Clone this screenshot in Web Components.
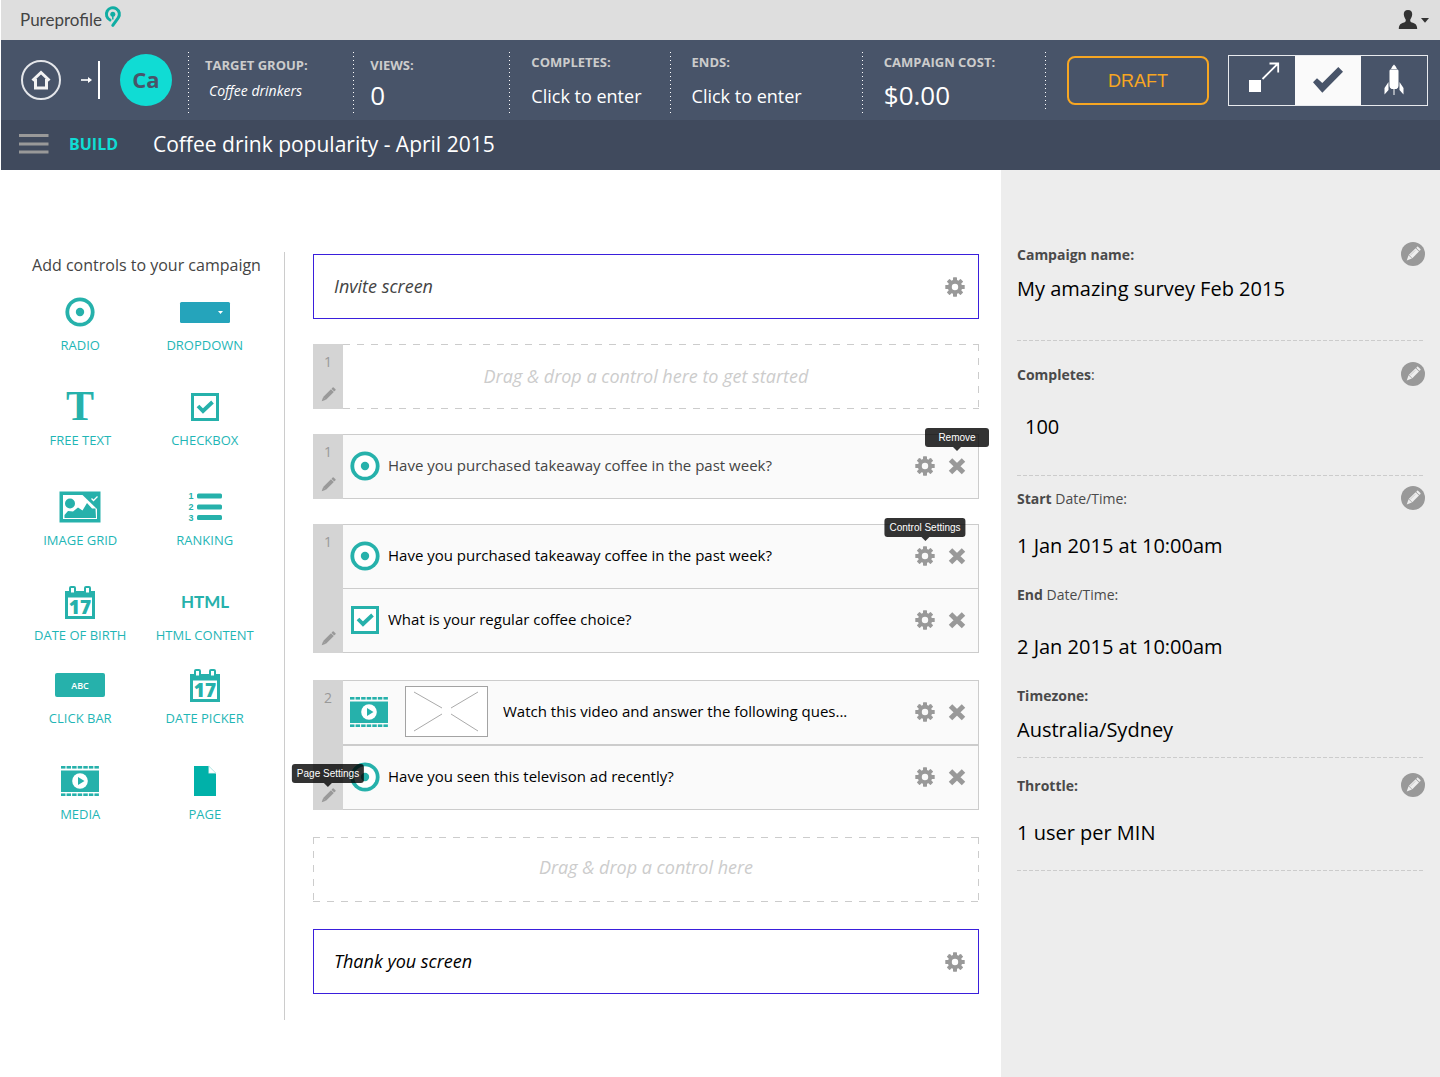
<!DOCTYPE html>
<html lang="en">
<head>
<meta charset="utf-8">
<title>Pureprofile – Build campaign</title>
<style>
  html { height: 100%; }
  body {
    margin: 0; padding-left: 1px; box-sizing: border-box; min-height: 100%;
    display: flex; flex-direction: column; background: #fff; color: #000;
    font-family: "Open Sans", "Noto Sans", sans-serif; font-size: 15px;
    --teal: #26b1ab; --label: #1fb6b6; --bright: #10dcd4; --line: #ccc; --grey: #999; --navy: #485469;
  }
  .workspace { flex: 1; display: flex; }
  main { flex: 1; min-width: 0; padding: 84px 22px 40px 28px; }
</style>
</head>
<body>
<pp-top-bar></pp-top-bar>

<pp-campaign-bar initials="Ca">
  <pp-stat label="Target group:" kind="note">Coffee drinkers</pp-stat>
  <pp-stat label="Views:" kind="number">0</pp-stat>
  <pp-stat label="Completes:" kind="action" wide>Click to enter</pp-stat>
  <pp-stat label="Ends:" kind="action" wide>Click to enter</pp-stat>
  <pp-stat label="Campaign cost:" kind="number" wide>$0.00</pp-stat>
</pp-campaign-bar>

<pp-title-bar mode="BUILD">Coffee drink popularity - April 2015</pp-title-bar>

<div class="workspace">
  <pp-palette heading="Add controls to your campaign">
    <pp-tool icon="radio">RADIO</pp-tool>
    <pp-tool icon="dropdown">DROPDOWN</pp-tool>
    <pp-tool icon="text">FREE TEXT</pp-tool>
    <pp-tool icon="checkbox">CHECKBOX</pp-tool>
    <pp-tool icon="image">IMAGE GRID</pp-tool>
    <pp-tool icon="ranking">RANKING</pp-tool>
    <pp-tool icon="calendar">DATE OF BIRTH</pp-tool>
    <pp-tool icon="html">HTML CONTENT</pp-tool>
    <pp-tool icon="clickbar">CLICK BAR</pp-tool>
    <pp-tool icon="calendar">DATE PICKER</pp-tool>
    <pp-tool icon="media">MEDIA</pp-tool>
    <pp-tool icon="page">PAGE</pp-tool>
  </pp-palette>

  <main>
    <pp-screen muted>Invite screen</pp-screen>
    <pp-page number="1"><pp-drop-zone>Drag &amp; drop a control here to get started</pp-drop-zone></pp-page>
    <pp-page number="1">
      <pp-question icon="radio" muted remove-tip="Remove">Have you purchased takeaway coffee in the past week?</pp-question>
    </pp-page>
    <pp-page number="1">
      <pp-question icon="radio" settings-tip="Control Settings">Have you purchased takeaway coffee in the past week?</pp-question>
      <pp-question icon="checkbox" joined>What is your regular coffee choice?</pp-question>
    </pp-page>
    <pp-page number="2" tip="Page Settings" loose>
      <pp-question icon="media" thumb>Watch this video and answer the following ques...</pp-question>
      <pp-question icon="radio">Have you seen this televison ad recently?</pp-question>
    </pp-page>
    <pp-drop-zone framed>Drag &amp; drop a control here</pp-drop-zone>
    <pp-screen loose>Thank you screen</pp-screen>
  </main>

  <pp-details>
    <pp-section>
      <pp-field editable><b slot="label">Campaign name:</b>My amazing survey Feb 2015</pp-field>
    </pp-section>
    <pp-section class="roomy">
      <pp-field editable space="far" indent><span slot="label"><b>Completes</b>:</span>100</pp-field>
    </pp-section>
    <pp-section class="dates">
      <pp-field editable space="mid"><span slot="label"><b>Start</b> Date/Time:</span>1 Jan 2015 at 10:00am</pp-field>
      <pp-field space="far"><span slot="label"><b>End</b> Date/Time:</span>2 Jan 2015 at 10:00am</pp-field>
      <pp-field><b slot="label">Timezone:</b>Australia/Sydney</pp-field>
    </pp-section>
    <pp-section class="last">
      <pp-field editable space="mid"><b slot="label">Throttle:</b>1 user per MIN</pp-field>
    </pp-section>
  </pp-details>
</div>

<script>
const RESET = `
  *, *::before, *::after { box-sizing: border-box; }
  button { font: inherit; color: inherit; background: none; border: 0; padding: 0; margin: 0; cursor: pointer; }
  a { color: inherit; text-decoration: none; }
  pp-icon { flex: none; }
`;

function define(name, build) {
  customElements.define(name, class extends HTMLElement {
    connectedCallback() {
      if (this.shadowRoot) return;
      const template = document.createElement('template');
      template.innerHTML = build(this);
      this.attachShadow({ mode: 'open' }).append(template.content.cloneNode(true));
    }
  });
}

/* ---------- icons: [width, height, markup] ---------- */
const teeth = [0, 45, 90, 135, 180, 225, 270, 315]
  .map(a => `<rect x="8" y="0.3" width="4" height="5" rx="0.6" transform="rotate(${a} 10 10)"/>`).join('');
const perforations = (y, w) => Array.from({ length: 7 }, (_, i) =>
  `<rect x="${(i * (w + 1) / 7).toFixed(2)}" y="${y}" width="${((w + 1) / 7 - 1.1).toFixed(2)}" height="2.6"/>`).join('');
const ICONS = {
  radio: [30, 30, `<circle cx="15" cy="15" r="14.6" fill="#26b1ab"/><circle cx="15" cy="15" r="10.8" fill="#fff"/><circle cx="15" cy="15" r="4.2" fill="#26b1ab"/>`],
  dropdown: [50, 21, `<rect width="50" height="21" rx="1.5" fill="#25a4bb"/><path d="M38 9h5l-2.5 3z" fill="#fff"/>`],
  text: [30, 32, `<text x="15" y="29" text-anchor="middle" font-family="Liberation Serif, serif" font-weight="700" font-size="42" fill="#26b1ab">T</text>`],
  checkbox: [30, 30, `<rect x="2.5" y="2.5" width="25" height="25" fill="#fff" stroke="#26b1ab" stroke-width="3"/><path d="M8 14l5 5 9.500-9" fill="none" stroke="#26b1ab" stroke-width="3.800"/>`],
  image: [42, 32, `<path d="M0.5 0.5h41v31h-41z" fill="#26b1ab"/><path d="M4 4h19.5L38 18v10H4z" fill="#fff"/><circle cx="11" cy="12.5" r="5" fill="#26b1ab"/><path d="M5.500 27v-3l3.500-4 5 .5 5-4 4.500 3 4.500-7.500 5 5.500h3.500l.5 9.500z" fill="#26b1ab"/><path d="M32.500 7.500l2 2 4-4" fill="none" stroke="#fff" stroke-width="1.3"/>`],
  ranking: [34, 30, `<g fill="#26b1ab"><rect x="9" y="1.500" width="25" height="5" rx="1.500"/><rect x="9" y="12.500" width="25" height="5" rx="1.500"/><rect x="9" y="23" width="25" height="5" rx="1.500"/><g font-family="Liberation Sans, Arial, sans-serif" font-weight="700" font-size="9"><text x="0.500" y="7">1</text><text x="0.500" y="18">2</text><text x="0.500" y="29">3</text></g></g>`],
  calendar: [30, 33, `<path d="M0 5h30v28H0z" fill="#26b1ab"/><path d="M3 11.500h24v18.500H3z" fill="#fff"/><g fill="#fff" stroke="#26b1ab" stroke-width="2"><rect x="5" y="1" width="5" height="6.500" rx="1"/><rect x="20" y="1" width="5" height="6.500" rx="1"/></g><text x="15" y="27.500" text-anchor="middle" font-family="Open Sans, sans-serif" font-weight="800" font-size="19" fill="#26b1ab">17</text>`],
  html: [48, 22, `<text x="24" y="17" text-anchor="middle" font-family="Lato, sans-serif" font-weight="700" font-size="17" fill="#26b1ab">HTML</text>`],
  clickbar: [50, 24, `<rect width="50" height="24" rx="2" fill="#26b1ab"/><text x="25" y="15.500" text-anchor="middle" font-family="Open Sans, sans-serif" font-weight="600" font-size="9" fill="#fff">ABC</text>`],
  media: [38, 30, `<g fill="#26b1ab">${perforations(0, 38)}${perforations(27.4, 38)}<rect y="4.500" width="38" height="21.500"/></g><circle cx="19" cy="15" r="7.800" fill="#fff"/><path d="M17 11v8l6.500-4z" fill="#26b1ab"/>`],
  page: [22, 30, `<path d="M0 0h14.500L22 7.500V30H0z" fill="#00b1a9"/><path d="M14.700 0v7.300H22z" fill="#fff" stroke="#8fd9d5" stroke-width=".5"/>`],
  gear: [20, 20, `<g fill="#999">${teeth}</g><circle cx="10" cy="10" r="5.200" fill="none" stroke="#999" stroke-width="4"/>`],
  close: [20, 20, `<path d="M3.500 4l13 12.500M16.500 4l-13 12.500" stroke="#999" stroke-width="5" fill="none"/>`],
  pencil: [16, 16, `<g fill="#999" transform="rotate(45 8 8)"><rect x="6" y="-1.300" width="4" height="2.500" rx=".7"/><rect x="6" y="1.800" width="4" height="11"/><path d="M6 12.800h4l-2 4.200z"/></g>`],
  edit: [24, 24, `<circle cx="12" cy="12" r="12" fill="#999"/><g fill="#eee" transform="rotate(45 12 12)"><rect x="9.700" y="3.300" width="4.800" height="2" rx=".7"/><rect x="9.700" y="6" width="4.800" height="9.500"/><path d="M9.700 16h4.800L12.100 21z"/></g><path d="M14.300 8.300l-5 5" stroke="#bbb" stroke-width=".7"/>`],
  thumb: [83, 51, `<rect x=".5" y=".5" width="82" height="50" fill="#fff" stroke="#a3a3a3"/><path d="M9 6l28 16M73 6L46 22M9 45l28-17M73 45L46 28" stroke="#aaa" fill="none"/>`],
  home: [40, 40, `<circle cx="20" cy="20" r="19" fill="none" stroke="#e4e6ea" stroke-width="2"/><path d="M11.500 20.500L20 12.500l8.500 8M14.500 19v9h11v-9" fill="none" stroke="#f3f3f3" stroke-width="3"/>`],
  next: [12, 10, `<path d="M0 5h8" stroke="#fff" stroke-width="1.600"/><path d="M7 2l4 3-4 3z" fill="#fff"/>`],
  menu: [30, 20, `<g fill="#999"><rect y="0" width="29.500" height="3"/><rect y="8.500" width="29.500" height="3"/><rect y="16.500" width="29.500" height="3"/></g>`],
  expand: [32, 32, `<path d="M3 16h12v12H3z" fill="#fff"/><path d="M16.500 15L32 -.5M23.500 -.5h8.700v9" fill="none" stroke="#fff" stroke-width="1.800"/>`],
  tick: [30, 26, `<path d="M0 15.300l4-4 5.300 4.700L25.300 0 30 4.700 9.300 25.700z" fill="#485469"/>`],
  rocket: [20, 32, `<g fill="#fff"><path d="M7 5q1-3 3-4.500Q12 2 13 5z"/><path d="M5.500 7q0-1 1-1.400h7q1 .4 1 1.400v15q0 2-2 3h-5q-2-1-2-3z"/><path d="M4.500 18v8L.5 30.500V24zM15.500 18v8l4 4.500V24z"/><rect x="9.500" y="25" width="1" height="6"/></g>`],
  user: [20, 20, `<path d="M10 0c3 0 4.400 1.900 4.200 4.500-.2 2.500-1.400 4-1.900 5-.3 1.600.2 2.500 1.500 3 3.200 1 5.400 1.800 5.400 6.500H.8c0-4.700 2.200-5.500 5.400-6.500 1.300-.5 1.800-1.400 1.500-3-.5-1-1.700-2.500-1.900-5C5.600 1.900 7 0 10 0z" fill="#333"/>`],
  caret: [8, 5, `<path d="M0 0h8L4 4.800z" fill="#333"/>`],
  pin: [17, 22, `<path d="M5 14A6.500 6.500 0 1 1 13.200 11.900L7.800 19.300" fill="none" stroke="#10ada3" stroke-width="3" stroke-linecap="round"/><circle cx="7.800" cy="8.200" r="2.500" fill="#10ada3"/><path d="M7.800 9v4.500" stroke="#10ada3" stroke-width="1.500"/>`]
};

define('pp-icon', el => {
  const [w, h, body] = ICONS[el.getAttribute('name')];
  return `<style>:host { display: inline-flex; } svg { display: block; overflow: visible; }</style>
    <svg width="${w}" height="${h}" viewBox="0 0 ${w} ${h}" aria-hidden="true">${body}</svg>`;
});

define('pp-tooltip', () => `
  <style>
    :host { position: absolute; left: 50%; bottom: 100%; transform: translateX(-50%); z-index: 2; pointer-events: none;
      padding: 0 5px; height: 19px; min-width: 64px; text-align: center; white-space: nowrap; border-radius: 3px;
      background: rgba(0, 0, 0, .8); color: #fff; font: 10px/19px "Liberation Sans", Arial, sans-serif; }
    :host::after { content: ""; position: absolute; left: 50%; top: 100%; margin-left: -4px;
      border: 4px solid transparent; border-bottom: 0; border-top-color: rgba(0, 0, 0, .8); }
  </style><slot></slot>`);

/* ---------- header ---------- */
define('pp-top-bar', () => `
  <style>${RESET}
    :host { display: flex; align-items: center; justify-content: space-between; height: 40px; padding: 0 11px 0 19px; background: #dedede; }
    .brand { display: flex; align-items: flex-start; gap: 3px; color: #444; font: 17px/28px Lato, sans-serif; }
    .user { display: flex; align-items: center; gap: 3px; }
  </style>
  <a class="brand" href="#">Pureprofile<pp-icon name="pin"></pp-icon></a>
  <button class="user" aria-label="Account"><pp-icon name="user"></pp-icon><pp-icon name="caret"></pp-icon></button>`);

define('pp-campaign-bar', el => `
  <style>${RESET}
    :host { display: flex; align-items: center; height: 80px; padding: 0 12px 0 20px; background: var(--navy); color: #fff; }
    .home { display: flex; }
    .next { margin-left: 20px; padding-right: 5px; border-right: 2px solid #fff; height: 38px; display: flex; align-items: center; }
    .avatar { flex: none; width: 52px; height: 52px; margin: 0 16px 0 20px; border-radius: 50%; background: var(--bright); color: var(--navy);
      font-weight: 700; font-size: 22px; line-height: 50px; text-align: center; }
    .stats { flex: 1; display: grid; grid-template-columns: 165fr 156fr 160fr 192fr 184fr; height: 57px;
      background: repeating-linear-gradient(#fff 0 1px, transparent 1px 4px) right / 1px 100% no-repeat; }
    .status { width: 142px; height: 49px; margin: 0 19px 0 21px; padding: 3px 0 0; border: 2px solid #f7a622; border-radius: 8px; color: #f7a622;
      font: 18px "Liberation Sans", Arial, sans-serif; }
    .steps { display: flex; border: 1px solid #e8eaee; height: 51px; }
    .steps button { width: 66px; display: flex; align-items: center; justify-content: center; }
    .steps .on { background: #fafafa; }
  </style>
  <a class="home" href="#" aria-label="Home"><pp-icon name="home"></pp-icon></a>
  <span class="next"><pp-icon name="next"></pp-icon></span>
  <span class="avatar">${el.getAttribute('initials')}</span>
  <div class="stats"><slot></slot></div>
  <button class="status">DRAFT</button>
  <div class="steps">
    <button aria-label="Plan"><pp-icon name="expand"></pp-icon></button>
    <button class="on" aria-label="Check" aria-pressed="true"><pp-icon name="tick"></pp-icon></button>
    <button aria-label="Launch"><pp-icon name="rocket"></pp-icon></button>
  </div>`);

define('pp-stat', el => `
  <style>${RESET}
    :host { display: flex; flex-direction: column; padding: 4px 0 0 17px; white-space: nowrap;
      background: repeating-linear-gradient(#fff 0 1px, transparent 1px 4px) left / 1px 100% no-repeat; }
    :host([wide]) { padding: 1px 0 0 22px; }
    .label { font-weight: 700; font-size: 13px; line-height: 18px; color: #ccc; text-transform: uppercase; }
    .value { text-align: left; line-height: 36px; font-size: 18px; margin-top: 3px; }
    :host([wide]) .value { margin-top: 6px; }
    .note { font-style: italic; font-size: 14px; line-height: 28px; padding-left: 4px; }
    .number { font-size: 26px; }
    button.value { line-height: 38px; }
  </style>
  <span class="label">${el.getAttribute('label')}</span>
  ${el.getAttribute('kind') === 'action'
    ? '<button class="value"><slot></slot></button>'
    : `<span class="value ${el.getAttribute('kind')}"><slot></slot></span>`}`);

define('pp-title-bar', el => `
  <style>${RESET}
    :host { display: flex; align-items: center; height: 50px; box-sizing: border-box; padding: 0 18px 2px; background: #404a5d; color: #fff; }
    button { display: flex; }
    strong { margin-left: 20px; width: 84px; font-size: 16px; line-height: 24px; color: var(--bright); }
    h1 { margin: 0; font-weight: 400; font-size: 21px; line-height: 30px; }
  </style>
  <button aria-label="Menu"><pp-icon name="menu"></pp-icon></button>
  <strong>${el.getAttribute('mode')}</strong>
  <h1><slot></slot></h1>`);

/* ---------- palette ---------- */
define('pp-palette', el => `
  <style>${RESET}
    :host { display: block; width: 284px; padding: 82px 0 57px; }
    .inner { height: 100%; border-right: 1px solid var(--line); padding: 0 17px; }
    h2 { margin: 0; padding-left: 8px; font-weight: 400; font-size: 16px; line-height: 26px; color: #444; text-align: center; }
    .tools { display: grid; grid-template-columns: 1fr 1fr; grid-template-rows: 95px 100px 95px 83px 96px auto; margin-top: 17px; }
  </style>
  <div class="inner"><h2>${el.getAttribute('heading')}</h2><div class="tools"><slot></slot></div></div>`);

define('pp-tool', el => `
  <style>${RESET}
    :host { display: flex; justify-content: center; align-items: flex-start; }
    button { display: flex; flex-direction: column; align-items: center; gap: 7px; color: var(--label); font-size: 13px; line-height: 18px; white-space: nowrap; }
    .art { height: 34px; display: flex; align-items: center; }
  </style>
  <button><span class="art"><pp-icon name="${el.getAttribute('icon')}"></pp-icon></span><slot></slot></button>`);

/* ---------- canvas ---------- */
define('pp-screen', () => `
  <style>${RESET}
    :host { display: flex; align-items: center; justify-content: space-between; height: 65px; box-sizing: border-box;
      padding: 0 13px 0 20px; border: 1px solid #3a1fdc; font-style: italic; font-size: 18px; }
    :host([muted]) { color: #444; }
    :host([loose]) { margin-top: 27px; }
    .title { padding-bottom: 2px; }
    button { display: flex; }
  </style>
  <span class="title"><slot></slot></span><button aria-label="Screen settings"><pp-icon name="gear"></pp-icon></button>`);

define('pp-drop-zone', () => `
  <style>
    :host { --h: repeating-linear-gradient(90deg, #ccc 0 7px, transparent 7px 14px); --v: repeating-linear-gradient(#ccc 0 7px, transparent 7px 14px);
      display: flex; align-items: center; justify-content: center; height: 65px; box-sizing: border-box; color: #ccc; font-style: italic; font-size: 18px;
      padding: 0 30px 2px 0;
      background: var(--h) top / 100% 1px no-repeat, var(--h) bottom / 100% 1px no-repeat, var(--v) right / 1px 100% no-repeat; }
    :host([framed]) { margin-top: 27px; padding: 0 0 6px;
      background: var(--h) top / 100% 1px no-repeat, var(--h) bottom / 100% 1px no-repeat, var(--v) right / 1px 100% no-repeat, var(--v) left / 1px 100% no-repeat; }
  </style><slot></slot>`);

define('pp-page', el => `
  <style>${RESET}
    :host { display: flex; margin-top: 25px; }
    :host([loose]) { margin-top: 27px; }
    .side { width: 30px; flex: none; display: flex; flex-direction: column; justify-content: space-between; align-items: center;
      padding: 8px 0 6px; background: #d4d4d4; color: #999; font-size: 14px; line-height: 20px; }
    .rows { flex: 1; min-width: 0; }
    .edit { position: relative; display: flex; }
    pp-tooltip { margin-bottom: 5px; }
  </style>
  <div class="side"><span>${el.getAttribute('number')}</span>
    <button class="edit" aria-label="Page settings"><pp-icon name="pencil"></pp-icon>${tip(el, 'tip')}</button></div>
  <div class="rows"><slot></slot></div>`);

function tip(el, name) {
  return el.hasAttribute(name) ? `<pp-tooltip>${el.getAttribute(name)}</pp-tooltip>` : '';
}

define('pp-question', el => `
  <style>${RESET}
    :host { display: flex; align-items: center; height: 65px; box-sizing: border-box; padding: 0 11px 2px 7px;
      background: #fafafa; border: solid var(--line); border-width: 1px 1px 1px 0; }
    :host([joined]) { margin-top: -1px; }
    :host([muted]) { color: #444; }
    .text { flex: 1; min-width: 0; margin-left: 8px; padding-bottom: 1px; line-height: 24px; white-space: nowrap; overflow: hidden; text-overflow: ellipsis; }
    .thumb { margin-left: 17px; }
    .thumb + .text { margin-left: 15px; }
    .actions { display: flex; gap: 12px; }
    .actions button { position: relative; display: flex; }
    .actions pp-tooltip { margin-bottom: 9px; }
  </style>
  <pp-icon name="${el.getAttribute('icon')}"></pp-icon>
  ${el.hasAttribute('thumb') ? '<pp-icon class="thumb" name="thumb"></pp-icon>' : ''}
  <span class="text"><slot></slot></span>
  <span class="actions">
    <button aria-label="Control settings"><pp-icon name="gear"></pp-icon>${tip(el, 'settings-tip')}</button>
    <button aria-label="Remove control"><pp-icon name="close"></pp-icon>${tip(el, 'remove-tip')}</button>
  </span>`);

/* ---------- details panel ---------- */
define('pp-details', () => `
  <style>
    :host { display: block; flex: none; width: 439px; box-sizing: border-box; padding: 72px 15px 40px 16px; background: #ededed; }
    ::slotted(pp-section) { --pad: 0 0 37px; }
    ::slotted(.roomy) { --pad: 21px 0 34px; }
    ::slotted(.dates) { --pad: 10px 0 13px; }
    ::slotted(.last) { --pad: 15px 0 23px; }
  </style><slot></slot>`);

define('pp-section', () => `
  <style>
    :host { display: flex; flex-direction: column; gap: 22px; padding: var(--pad);
      border-bottom: 1px solid transparent;
      background: repeating-linear-gradient(90deg, #ccc 0 4px, transparent 4px 6px) bottom / 100% 1px no-repeat border-box; }
  </style><slot></slot>`);

define('pp-field', el => `
  <style>${RESET}
    :host { display: flex; flex-direction: column; gap: 9px; }
    :host([space="mid"]) { gap: 22px; }
    :host([space="far"]) { gap: 27px; }
    .head { display: flex; align-items: center; justify-content: space-between; height: 24px; font-size: 14px; color: #4a4a4a; }
    .head button { display: flex; }
    .value { font-size: 20px; line-height: 28px; }
    :host([indent]) .value { padding-left: 8px; }
  </style>
  <div class="head"><slot name="label"></slot>${el.hasAttribute('editable') ? '<button aria-label="Edit"><pp-icon name="edit"></pp-icon></button>' : ''}</div>
  <div class="value"><slot></slot></div>`);
</script>
</body>
</html>
